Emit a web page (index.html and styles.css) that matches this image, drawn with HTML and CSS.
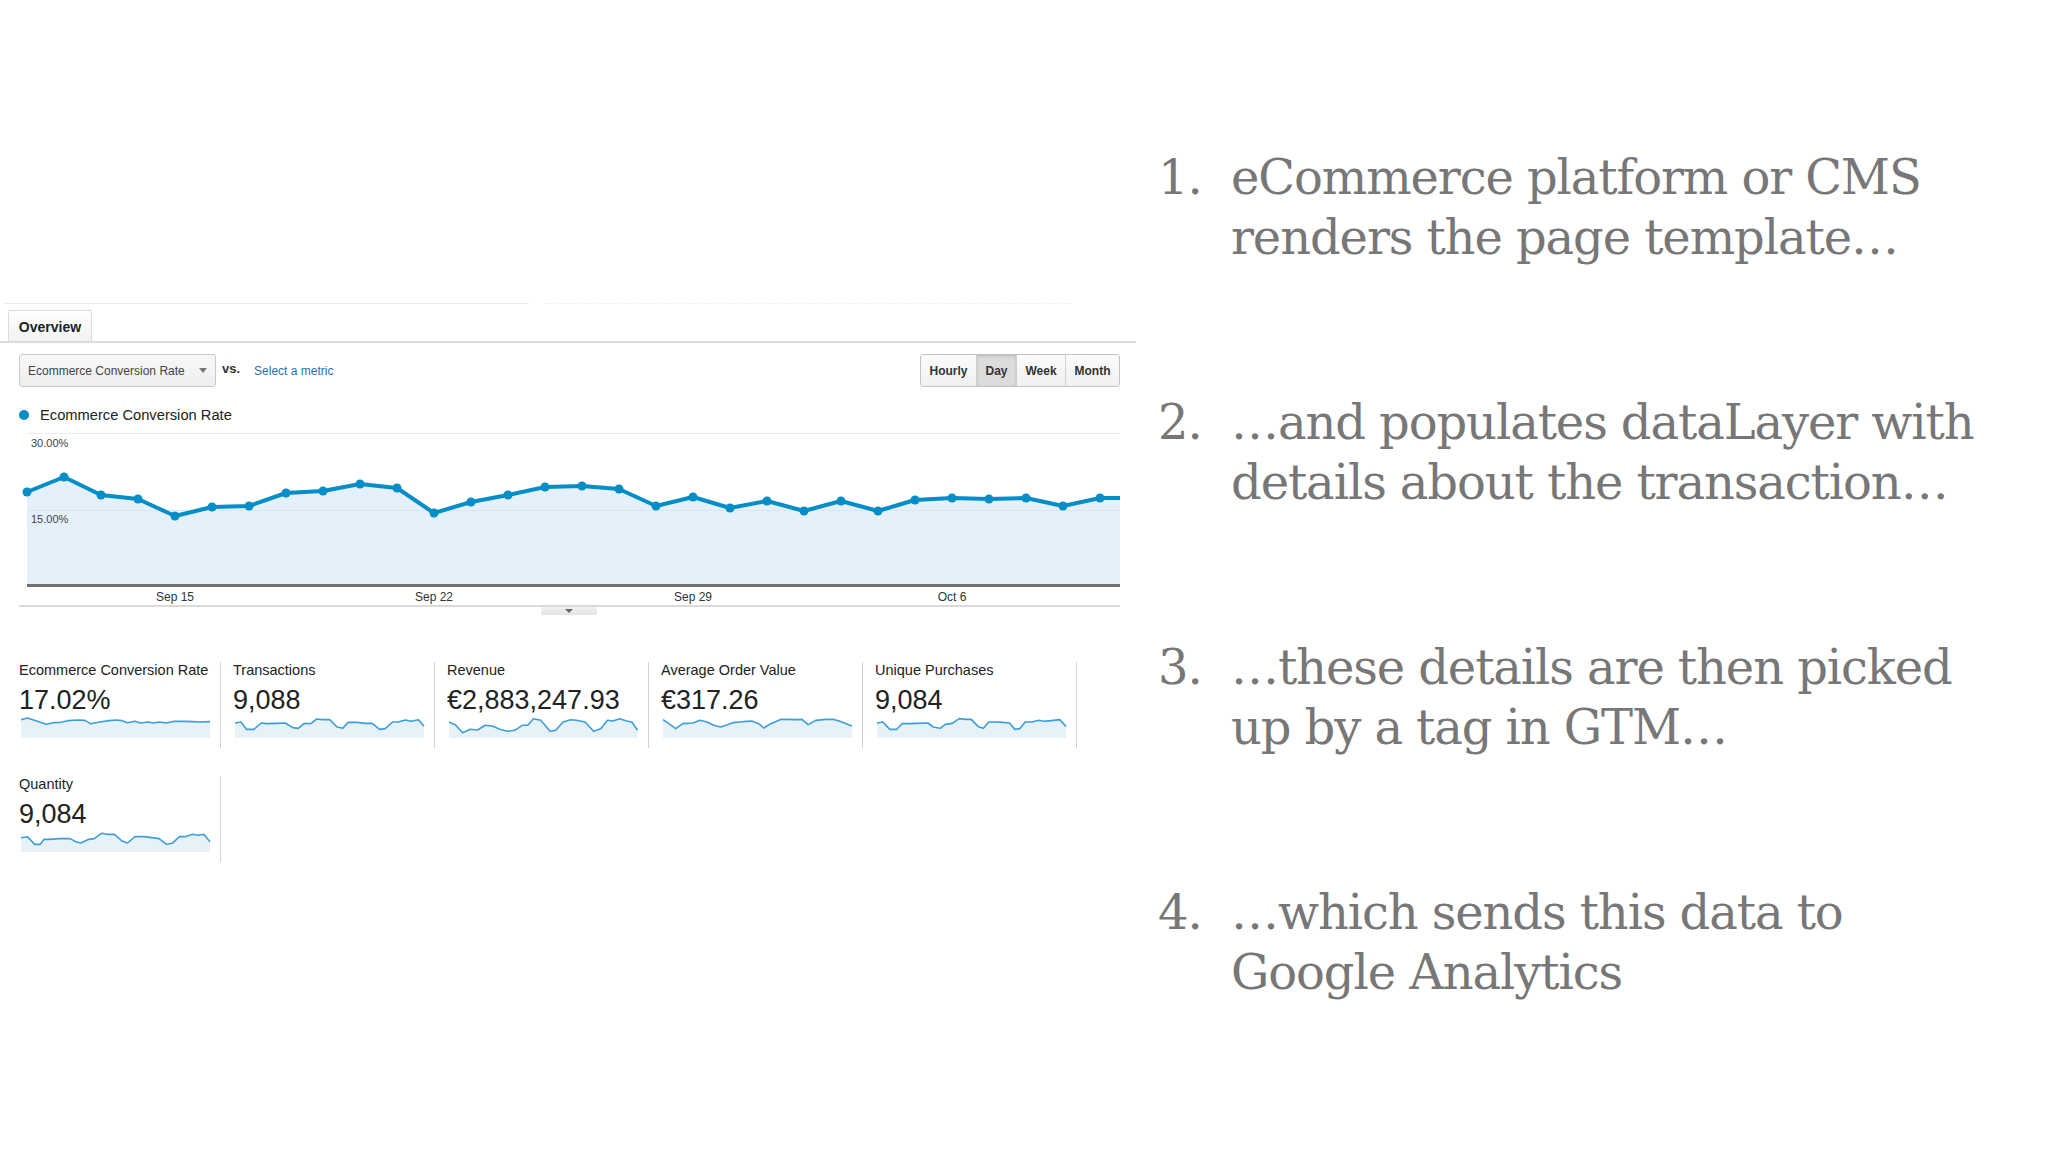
FILE: index.html
```html
<!DOCTYPE html>
<html>
<head>
<meta charset="utf-8">
<link rel="stylesheet" href="styles.css">
</head>
<body>
<div class="slide">
  <section class="ga">
    <div class="topline"><span class="solid"></span><span class="dashed"></span></div>
    <div class="tabbar"><div class="tab">Overview</div></div>

    <div class="controls">
      <div class="select">Ecommerce Conversion Rate<span class="caret"></span></div>
      <span class="vs">vs.</span>
      <span class="metric-link">Select a metric</span>
      <div class="btn-group">
        <span class="btn w-hourly">Hourly</span>
        <span class="btn w-day active">Day</span>
        <span class="btn w-week">Week</span>
        <span class="btn w-month">Month</span>
      </div>
    </div>

    <div class="legend"><span class="dot"></span>Ecommerce Conversion Rate</div>

    <div class="chart">
      <svg class="plot" width="1093" height="151" viewBox="0 0 1093 151">
        <line x1="0" y1="0.5" x2="1093" y2="0.5" class="grid"/>
        <polygon class="area" points="0,59 37,44 74,62 111,66 148,83 185,74 222,73 259,60 296,58 333,51 370,55 407,80 444,69 481,62 518,54 555,53 592,56 629,73 666,64 703,75 740,68 777,78 814,68 851,78 888,67 925,65 962,66 999,65 1036,73 1073,65 1093,65 1093,151 0,151"/>
        <line x1="0" y1="77.5" x2="1093" y2="77.5" class="grid mid"/>
        <polyline class="line" points="0,59 37,44 74,62 111,66 148,83 185,74 222,73 259,60 296,58 333,51 370,55 407,80 444,69 481,62 518,54 555,53 592,56 629,73 666,64 703,75 740,68 777,78 814,68 851,78 888,67 925,65 962,66 999,65 1036,73 1073,65 1093,65"/>
        <g class="pts">
          <circle cx="0" cy="59" r="4.5"/><circle cx="37" cy="44" r="4.5"/><circle cx="74" cy="62" r="4.5"/><circle cx="111" cy="66" r="4.5"/><circle cx="148" cy="83" r="4.5"/><circle cx="185" cy="74" r="4.5"/><circle cx="222" cy="73" r="4.5"/><circle cx="259" cy="60" r="4.5"/><circle cx="296" cy="58" r="4.5"/><circle cx="333" cy="51" r="4.5"/><circle cx="370" cy="55" r="4.5"/><circle cx="407" cy="80" r="4.5"/><circle cx="444" cy="69" r="4.5"/><circle cx="481" cy="62" r="4.5"/><circle cx="518" cy="54" r="4.5"/><circle cx="555" cy="53" r="4.5"/><circle cx="592" cy="56" r="4.5"/><circle cx="629" cy="73" r="4.5"/><circle cx="666" cy="64" r="4.5"/><circle cx="703" cy="75" r="4.5"/><circle cx="740" cy="68" r="4.5"/><circle cx="777" cy="78" r="4.5"/><circle cx="814" cy="68" r="4.5"/><circle cx="851" cy="78" r="4.5"/><circle cx="888" cy="67" r="4.5"/><circle cx="925" cy="65" r="4.5"/><circle cx="962" cy="66" r="4.5"/><circle cx="999" cy="65" r="4.5"/><circle cx="1036" cy="73" r="4.5"/><circle cx="1073" cy="65" r="4.5"/>
        </g>
      </svg>
      <span class="ylabel y30">30.00%</span>
      <span class="ylabel y15">15.00%</span>
      <div class="axis">
        <span class="xlabel" style="left:148px">Sep 15</span>
        <span class="xlabel" style="left:407px">Sep 22</span>
        <span class="xlabel" style="left:666px">Sep 29</span>
        <span class="xlabel" style="left:925px">Oct 6</span>
      </div>
    </div>
    <div class="chartfoot"><span class="handle"><span class="tri"></span></span></div>

    <div class="cards">
      <div class="card">
        <div class="label">Ecommerce Conversion Rate</div>
        <div class="value">17.02%</div>
        <svg class="spark" viewBox="58 228 509 60" preserveAspectRatio="none">
          <polygon class="sfill" points="58,233 75,228 100,237 125,247 145,242 165,241 185,236 210,234 230,235 245,245 270,240 295,236 315,234 330,236 345,242 365,238 380,243 400,240 415,243 430,240 450,243 470,238 500,238 520,239 540,240 567,239 567,288 58,288"/>
          <polyline class="sline" points="58,233 75,228 100,237 125,247 145,242 165,241 185,236 210,234 230,235 245,245 270,240 295,236 315,234 330,236 345,242 365,238 380,243 400,240 415,243 430,240 450,243 470,238 500,238 520,239 540,240 567,239"/>
        </svg>
      </div>
      <div class="card">
        <div class="label">Transactions</div>
        <div class="value">9,088</div>
        <svg class="spark" viewBox="634 228 511 60" preserveAspectRatio="none">
          <polygon class="sfill" points="634,243 650,240 665,262 685,262 705,243 720,245 745,244 770,243 790,257 805,259 820,245 840,244 855,231 870,233 890,233 910,255 925,259 940,241 965,241 985,244 1005,244 1025,262 1040,260 1060,240 1075,240 1095,234 1110,238 1130,233 1145,253 1145,288 634,288"/>
          <polyline class="sline" points="634,243 650,240 665,262 685,262 705,243 720,245 745,244 770,243 790,257 805,259 820,245 840,244 855,231 870,233 890,233 910,255 925,259 940,241 965,241 985,244 1005,244 1025,262 1040,260 1060,240 1075,240 1095,234 1110,238 1130,233 1145,253"/>
        </svg>
      </div>
      <div class="card">
        <div class="label">Revenue</div>
        <div class="value">€2,883,247.93</div>
        <svg class="spark" viewBox="0 0 188 20" preserveAspectRatio="none">
          <polygon class="sfill" points="0,4 6.3,6.7 13.6,14.7 21,11.3 28.4,12 35.8,7.3 43.2,8 50.6,11.3 58,13.3 65.4,12.3 72.8,7.3 78.4,7.3 83.9,0.7 91.3,2.3 100.6,13.3 106.1,12.3 113.5,4 120.9,1.7 126.7,2.3 135.3,4 143.9,13.3 150.8,10.7 157.7,2.3 162.9,3 169.7,0.7 176.6,3 181.8,4 187.6,12.3 187.6,20 0,20"/>
          <polyline class="sline" points="0,4 6.3,6.7 13.6,14.7 21,11.3 28.4,12 35.8,7.3 43.2,8 50.6,11.3 58,13.3 65.4,12.3 72.8,7.3 78.4,7.3 83.9,0.7 91.3,2.3 100.6,13.3 106.1,12.3 113.5,4 120.9,1.7 126.7,2.3 135.3,4 143.9,13.3 150.8,10.7 157.7,2.3 162.9,3 169.7,0.7 176.6,3 181.8,4 187.6,12.3"/>
        </svg>
      </div>
      <div class="card">
        <div class="label">Average Order Value</div>
        <div class="value">€317.26</div>
        <svg class="spark" viewBox="298 228 547 60" preserveAspectRatio="none">
          <polygon class="sfill" points="298,233 315,245 335,260 355,245 385,243 405,235 425,240 445,250 465,255 480,250 500,242 520,240 540,238 555,237 575,245 590,258 610,245 640,232 660,232 680,233 700,232 718,248 740,235 770,232 790,232 810,238 845,252 845,288 298,288"/>
          <polyline class="sline" points="298,233 315,245 335,260 355,245 385,243 405,235 425,240 445,250 465,255 480,250 500,242 520,240 540,238 555,237 575,245 590,258 610,245 640,232 660,232 680,233 700,232 718,248 740,235 770,232 790,232 810,238 845,252"/>
        </svg>
      </div>
      <div class="card">
        <div class="label">Unique Purchases</div>
        <div class="value">9,084</div>
        <svg class="spark" viewBox="918 228 545 60" preserveAspectRatio="none">
          <polygon class="sfill" points="918,243 935,240 955,262 975,262 990,245 1010,245 1030,244 1065,243 1080,255 1100,259 1115,247 1135,244 1155,230 1175,232 1190,232 1210,254 1225,259 1240,240 1260,240 1280,241 1300,243 1315,262 1330,260 1345,240 1365,240 1385,235 1400,238 1420,236 1445,233 1463,253 1463,288 918,288"/>
          <polyline class="sline" points="918,243 935,240 955,262 975,262 990,245 1010,245 1030,244 1065,243 1080,255 1100,259 1115,247 1135,244 1155,230 1175,232 1190,232 1210,254 1225,259 1240,240 1260,240 1280,241 1300,243 1315,262 1330,260 1345,240 1365,240 1385,235 1400,238 1420,236 1445,233 1463,253"/>
        </svg>
      </div>
      <div class="card">
        <div class="label">Quantity</div>
        <div class="value">9,084</div>
        <svg class="spark" viewBox="58 568 509 60" preserveAspectRatio="none">
          <polygon class="sfill" points="58,585 75,582 95,605 110,605 120,590 135,590 160,588 190,588 205,597 220,601 240,590 255,588 275,572 290,575 310,575 330,595 345,601 365,582 390,582 410,585 430,588 450,605 465,602 485,582 500,582 520,575 535,578 550,575 567,597 567,628 58,628"/>
          <polyline class="sline" points="58,585 75,582 95,605 110,605 120,590 135,590 160,588 190,588 205,597 220,601 240,590 255,588 275,572 290,575 310,575 330,595 345,601 365,582 390,582 410,585 430,588 450,605 465,602 485,582 500,582 520,575 535,578 550,575 567,597"/>
        </svg>
      </div>
    </div>
  </section>

  <ol class="steps">
    <li class="step"><span class="num">1.</span><span class="txt">eCommerce platform or CMS<br>renders the page template…</span></li>
    <li class="step"><span class="num">2.</span><span class="txt">…and populates dataLayer with<br>details about the transaction…</span></li>
    <li class="step"><span class="num">3.</span><span class="txt">…these details are then picked<br>up by a tag in GTM…</span></li>
    <li class="step"><span class="num">4.</span><span class="txt">…which sends this data to<br>Google Analytics</span></li>
  </ol>
</div>
</body>
</html>
```
FILE: styles.css
```css
* { box-sizing: border-box; }
html, body { margin: 0; padding: 0; background: #fff; }
body {
  width: 2048px; height: 1152px; overflow: hidden;
  font-family: "Liberation Sans", Arial, sans-serif; color: #333;
}
.slide { display: flex; height: 1152px; }

/* ---------- GA panel ---------- */
.ga { width: 1136px; flex: none; padding-top: 303px; }
.topline { display: flex; height: 1px; }
.topline .solid { width: 525px; margin-left: 4px; background: #ececec; }
.topline .dashed { margin-left: 15px; width: 527px; border-top: 1px dashed #f0f0f0; }

.tabbar { margin-top: 6px; border-bottom: 2px solid #dcdcdc; padding-left: 8px; display: flex; }
.tab {
  width: 84px; height: 31px; border: 1px solid #dcdcdc; border-bottom: none;
  border-radius: 2px 2px 0 0; background: linear-gradient(#ffffff, #f2f2f2);
  font-weight: bold; font-size: 14px; color: #222;
  display: flex; align-items: center; justify-content: center; padding-top: 2px;
}

.controls { display: flex; align-items: center; margin-top: 11px; padding: 0 16px 0 19px; height: 33px; }
.select {
  width: 197px; height: 33px; border: 1px solid #c8c8c8; border-radius: 3px;
  background: linear-gradient(#f8f8f8, #eeeeee); font-size: 12px; color: #444;
  display: flex; align-items: center; padding-left: 8px;
}
.caret {
  margin-left: auto; margin-right: 8px; width: 0; height: 0;
  border-left: 4px solid transparent; border-right: 4px solid transparent; border-top: 5px solid #777;
}
.vs { font-weight: bold; font-size: 13px; margin-left: 6px; color: #333; margin-top: -4px; }
.metric-link { font-size: 12px; color: #2a6fb3; margin-left: 14px; }
.btn-group {
  margin-left: auto; display: flex; height: 33px;
  border: 1px solid #c4c4c4; border-radius: 3px; overflow: hidden;
}
.btn {
  display: flex; align-items: center; justify-content: center;
  font-size: 12px; font-weight: bold; color: #333;
  background: linear-gradient(#fbfbfb, #f1f1f1); border-left: 1px solid #d0d0d0;
}
.btn:first-child { border-left: none; }
.btn.active { background: #dcdcdc; box-shadow: inset 0 1px 3px rgba(0,0,0,0.18); }
.w-hourly { width: 55px; } .w-day { width: 40px; } .w-week { width: 49px; } .w-month { width: 54px; }

.legend { display: flex; align-items: center; margin-top: 18px; height: 20px; padding-left: 19px; font-size: 14.7px; color: #222; }
.dot { width: 10px; height: 10px; border-radius: 50%; background: #058dc7; margin-right: 11px; }

.chart { position: relative; margin-top: 8px; margin-left: 27px; width: 1093px; }
.plot { display: block; overflow: visible; }
.grid { stroke: #ececec; stroke-width: 1; }
.grid.mid { stroke: #d9e6ee; }
.area { fill: #e4f1fa; }
.line { fill: none; stroke: #058dc7; stroke-width: 4; stroke-linejoin: round; }
.pts circle { fill: #058dc7; }
.ylabel { position: absolute; left: 4px; font-size: 11px; color: #444; line-height: 13px; }
.y30 { top: 4px; }
.y15 { top: 80px; }
.axis { position: relative; height: 21px; border-top: 3px solid #707070; }
.xlabel { position: absolute; top: 3px; transform: translateX(-50%); font-size: 12px; color: #333; white-space: nowrap; }

.chartfoot { position: relative; margin-left: 19px; width: 1101px; border-top: 2px solid #dadada; }
.handle {
  position: absolute; left: 522px; top: 0; width: 56px; height: 8px;
  background: linear-gradient(#f2f2f2, #e3e3e3); border-radius: 0 0 2px 2px;
  display: flex; justify-content: center; padding-top: 2px;
}
.tri { width: 0; height: 0; border-left: 4px solid transparent; border-right: 4px solid transparent; border-top: 4px solid #666; }

.cards { display: grid; grid-template-columns: repeat(5, 214px); row-gap: 28px; margin: 55px 0 0 7px; }
.card { height: 86px; border-right: 1px solid #d2d2d2; padding: 0 11px 0 12px; }
.label { font-size: 14.5px; line-height: 17px; color: #222; white-space: nowrap; }
.value { font-size: 27px; line-height: 30px; margin-top: 6px; color: #222; white-space: nowrap; }
.spark { display: block; width: 189px; height: 20px; margin: 3px 0 0 2px; overflow: visible; }
.sfill { fill: #e6f1f8; }
.sline { fill: none; stroke: #3d9fd7; stroke-width: 1.6; vector-effect: non-scaling-stroke; stroke-linejoin: round; }

/* ---------- steps ---------- */
.steps {
  flex: 1; margin: 0; padding: 147px 0 0 22px; list-style: none;
  font-family: "DejaVu Serif", "Liberation Serif", serif; color: #777777;
  font-size: 48px; letter-spacing: -1.1px; line-height: 60px;
}
.step { display: grid; grid-template-columns: 73px auto; margin-bottom: 125px; white-space: nowrap; }
```
